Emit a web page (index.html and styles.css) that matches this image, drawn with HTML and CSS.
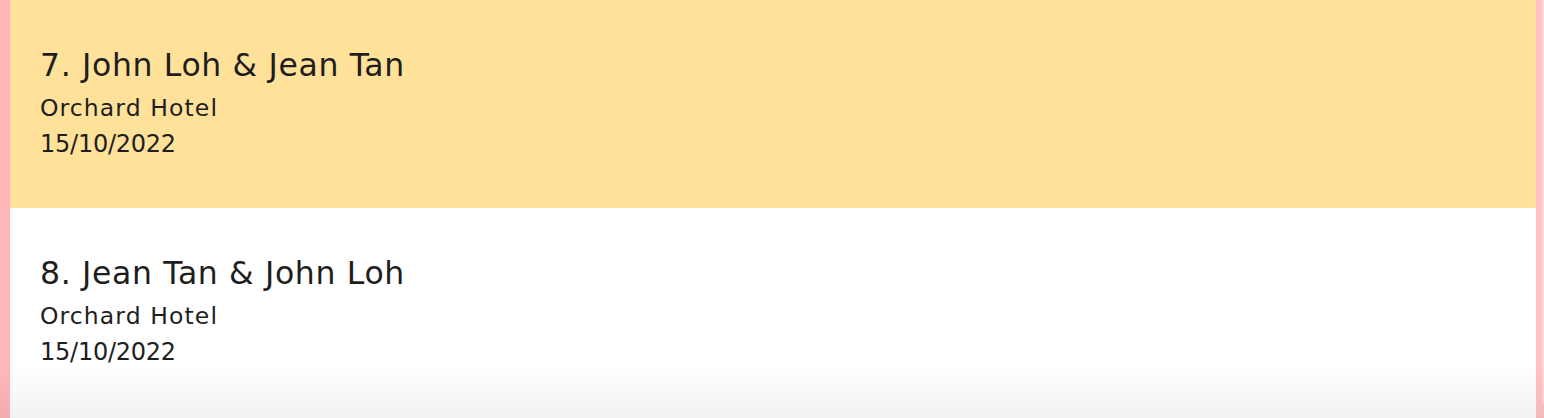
FILE: index.html
```html
<!DOCTYPE html>
<html>
<head>
<meta charset="utf-8">
<link rel="stylesheet" href="styles.css">
</head>
<body>
<div class="frame">
  <div class="list">
    <div class="card card-active">
      <div class="title">7. John Loh &amp; Jean Tan</div>
      <div class="venue">Orchard Hotel</div>
      <div class="date">15/10/2022</div>
    </div>
    <div class="card">
      <div class="title">8. Jean Tan &amp; John Loh</div>
      <div class="venue">Orchard Hotel</div>
      <div class="date">15/10/2022</div>
    </div>
  </div>
  <div class="scrollbar"><div class="thumb"></div></div>
  <div class="shade"></div>
</div>
</body>
</html>
```

FILE: styles.css
```css
html, body {
  margin: 0;
  padding: 0;
  height: 100%;
  overflow: hidden;
  background: #ffffff;
}

.frame {
  position: relative;
  display: flex;
  height: 418px;
  font-family: "DejaVu Sans", "Open Sans", sans-serif;
  color: #1e1e1e;
}

.list {
  flex: 1;
  border-left: 10px solid #ffb6bb;
  display: flex;
  flex-direction: column;
}

.card {
  height: 208px;
  box-sizing: border-box;
  padding: 45px 30px 0 30px;
  background: #ffffff;
  white-space: nowrap;
}

.card-active {
  background: #ffe19a;
}

.title {
  font-size: 31.5px;
  line-height: 40px;
  letter-spacing: 0.65px;
}

.venue {
  margin-top: 5px;
  font-size: 23.5px;
  line-height: 37px;
  letter-spacing: 1.1px;
}

.date {
  font-size: 24px;
  line-height: 35px;
  letter-spacing: -0.25px;
}

.scrollbar {
  width: 8px;
  background: #ffc2c6;
  display: flex;
  justify-content: flex-end;
}

.thumb {
  width: 2px;
  height: 404px;
  background: #ffd6da;
  border-radius: 0 0 2px 2px;
}

.shade {
  position: absolute;
  left: 0;
  right: 0;
  bottom: 0;
  height: 50px;
  background: linear-gradient(to bottom, rgba(0,0,0,0), rgba(0,0,0,0.05));
  pointer-events: none;
}
```
